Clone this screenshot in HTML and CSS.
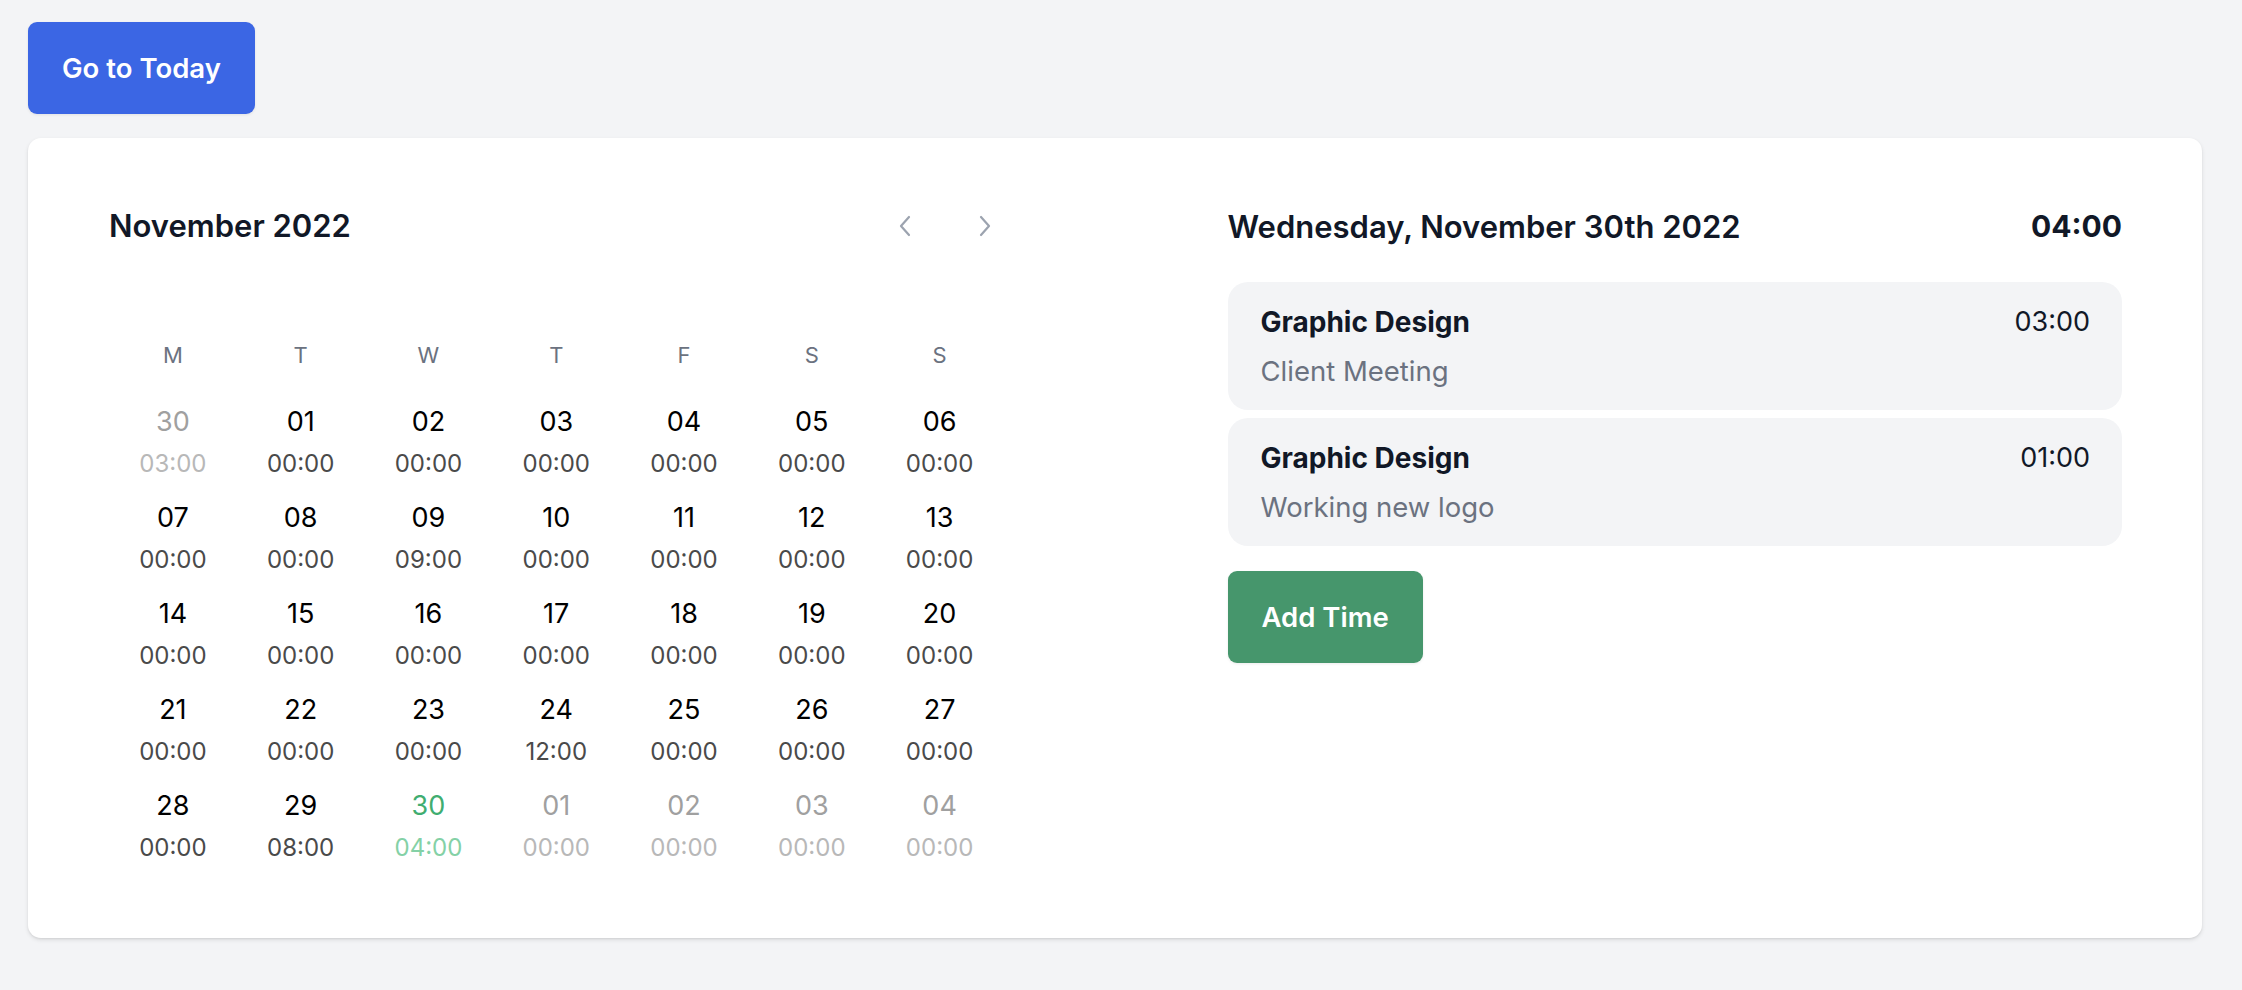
FILE: index.html
```html
<!DOCTYPE html>
<html lang="en">
<head>
<meta charset="utf-8">
<title>Calendar</title>
<link rel="stylesheet" href="styles.css">
</head>
<body>
<div class="page">
  <button class="btn btn-blue">Go to Today</button>
  <div class="card">
    <div class="layout">
      <section class="calendar">
        <div class="cal-header">
          <h2 class="month">November 2022</h2>
          <div class="nav">
            <button class="nav-btn" aria-label="Previous month">
              <svg width="14" height="22" viewBox="0 0 14 22"><polyline points="11,2 3,11 11,20" fill="none" stroke="#9ca3af" stroke-width="2.2" stroke-linecap="round" stroke-linejoin="round"/></svg>
            </button>
            <button class="nav-btn" aria-label="Next month">
              <svg width="14" height="22" viewBox="0 0 14 22"><polyline points="3,2 11,11 3,20" fill="none" stroke="#9ca3af" stroke-width="2.2" stroke-linecap="round" stroke-linejoin="round"/></svg>
            </button>
          </div>
        </div>
        <div class="weekdays">
          <div>M</div><div>T</div><div>W</div><div>T</div><div>F</div><div>S</div><div>S</div>
        </div>
        <div class="days">
          <div class="day other"><span class="num">30</span><span class="time">03:00</span></div>
          <div class="day"><span class="num">01</span><span class="time">00:00</span></div>
          <div class="day"><span class="num">02</span><span class="time">00:00</span></div>
          <div class="day"><span class="num">03</span><span class="time">00:00</span></div>
          <div class="day"><span class="num">04</span><span class="time">00:00</span></div>
          <div class="day"><span class="num">05</span><span class="time">00:00</span></div>
          <div class="day"><span class="num">06</span><span class="time">00:00</span></div>

          <div class="day"><span class="num">07</span><span class="time">00:00</span></div>
          <div class="day"><span class="num">08</span><span class="time">00:00</span></div>
          <div class="day"><span class="num">09</span><span class="time">09:00</span></div>
          <div class="day"><span class="num">10</span><span class="time">00:00</span></div>
          <div class="day"><span class="num">11</span><span class="time">00:00</span></div>
          <div class="day"><span class="num">12</span><span class="time">00:00</span></div>
          <div class="day"><span class="num">13</span><span class="time">00:00</span></div>

          <div class="day"><span class="num">14</span><span class="time">00:00</span></div>
          <div class="day"><span class="num">15</span><span class="time">00:00</span></div>
          <div class="day"><span class="num">16</span><span class="time">00:00</span></div>
          <div class="day"><span class="num">17</span><span class="time">00:00</span></div>
          <div class="day"><span class="num">18</span><span class="time">00:00</span></div>
          <div class="day"><span class="num">19</span><span class="time">00:00</span></div>
          <div class="day"><span class="num">20</span><span class="time">00:00</span></div>

          <div class="day"><span class="num">21</span><span class="time">00:00</span></div>
          <div class="day"><span class="num">22</span><span class="time">00:00</span></div>
          <div class="day"><span class="num">23</span><span class="time">00:00</span></div>
          <div class="day"><span class="num">24</span><span class="time">12:00</span></div>
          <div class="day"><span class="num">25</span><span class="time">00:00</span></div>
          <div class="day"><span class="num">26</span><span class="time">00:00</span></div>
          <div class="day"><span class="num">27</span><span class="time">00:00</span></div>

          <div class="day"><span class="num">28</span><span class="time">00:00</span></div>
          <div class="day"><span class="num">29</span><span class="time">08:00</span></div>
          <div class="day today"><span class="num">30</span><span class="time">04:00</span></div>
          <div class="day other"><span class="num">01</span><span class="time">00:00</span></div>
          <div class="day other"><span class="num">02</span><span class="time">00:00</span></div>
          <div class="day other"><span class="num">03</span><span class="time">00:00</span></div>
          <div class="day other"><span class="num">04</span><span class="time">00:00</span></div>
        </div>
      </section>
      <section class="details">
        <div class="details-header">
          <h2 class="date-title">Wednesday, November 30th 2022</h2>
          <div class="total">04:00</div>
        </div>
        <ul class="entries">
          <li class="entry">
            <div class="entry-top">
              <span class="entry-title">Graphic Design</span>
              <span class="entry-time">03:00</span>
            </div>
            <div class="entry-desc">Client Meeting</div>
          </li>
          <li class="entry">
            <div class="entry-top">
              <span class="entry-title">Graphic Design</span>
              <span class="entry-time">01:00</span>
            </div>
            <div class="entry-desc">Working new logo</div>
          </li>
        </ul>
        <button class="btn btn-green">Add Time</button>
      </section>
    </div>
  </div>
</div>
</body>
</html>
```
FILE: styles.css
```css
* { box-sizing: border-box; }
html, body { margin: 0; padding: 0; }
body {
  background: #f3f4f6;
  font-family: Inter, "Noto Sans", "Liberation Sans", sans-serif;
  color: #111827;
}
.page {
  padding: 22px 40px 40px 28px;
  display: flex;
  flex-direction: column;
  align-items: flex-start;
  gap: 24px;
}
.btn {
  border: none;
  font-family: inherit;
  font-weight: 600;
  font-size: 27.5px;
  color: #fff;
  height: 92px;
  padding: 0 34px;
  border-radius: 9px;
  cursor: pointer;
  box-shadow: 0 1px 3px rgba(0,0,0,0.08);
}
.btn-blue { background: #3b66e4; }
.btn-green { background: #46966c; }

.card {
  align-self: stretch;
  background: #fff;
  border-radius: 13px;
  box-shadow: 0 2px 4px rgba(0,0,0,0.10), 0 1px 2px rgba(0,0,0,0.06);
  padding: 66px 80px 68px 81px;
}
.layout {
  display: grid;
  grid-template-columns: 1fr 1fr;
  column-gap: 224px;
}
.cal-header {
  display: flex;
  align-items: center;
  justify-content: space-between;
  height: 44px;
}
.month {
  margin: 0;
  font-size: 31px;
  font-weight: 600;
  color: #111827;
  line-height: 44px;
}
.nav { display: flex; gap: 42px; }
.nav-btn {
  width: 38px;
  height: 44px;
  border: none;
  background: none;
  padding: 0;
  display: flex;
  align-items: center;
  justify-content: center;
}
.weekdays {
  margin-top: 91px;
  display: grid;
  grid-template-columns: repeat(7, 1fr);
  text-align: center;
  font-size: 22px;
  line-height: 32px;
  color: #6b7280;
}
.days {
  margin-top: 31px;
  display: grid;
  grid-template-columns: repeat(7, 1fr);
  row-gap: 12px;
  text-align: center;
}
.day { display: flex; flex-direction: column; align-items: center; }
.num { font-size: 27px; line-height: 40px; color: #000; }
.time { font-size: 24px; line-height: 44px; color: #4a4a4a; }
.day.other .num { color: #a0a0a0; }
.day.other .time { color: #b8b8b8; }
.day.today .num { color: #40ad70; }
.day.today .time { color: #84d1a6; }

.details-header {
  display: flex;
  align-items: center;
  justify-content: space-between;
  height: 44px;
}
.date-title {
  margin: 0;
  font-size: 31px;
  font-weight: 600;
  color: #111827;
}
.total {
  font-size: 30px;
  font-weight: 700;
  color: #111827;
}
.entries {
  list-style: none;
  margin: 34px 0 0;
  padding: 0;
  display: flex;
  flex-direction: column;
  gap: 8px;
}
.entry {
  background: #f3f4f6;
  border-radius: 20px;
  padding: 21px 32px 20px 33px;
}
.entry-top {
  display: flex;
  justify-content: space-between;
  align-items: center;
  line-height: 38px;
}
.entry-title { font-size: 28px; font-weight: 700; color: #111827; }
.entry-time { font-size: 27px; color: #111827; }
.entry-desc {
  margin-top: 11px;
  font-size: 27.5px;
  line-height: 38px;
  color: #6b7280;
}
.btn-green { margin-top: 25px; }
```
